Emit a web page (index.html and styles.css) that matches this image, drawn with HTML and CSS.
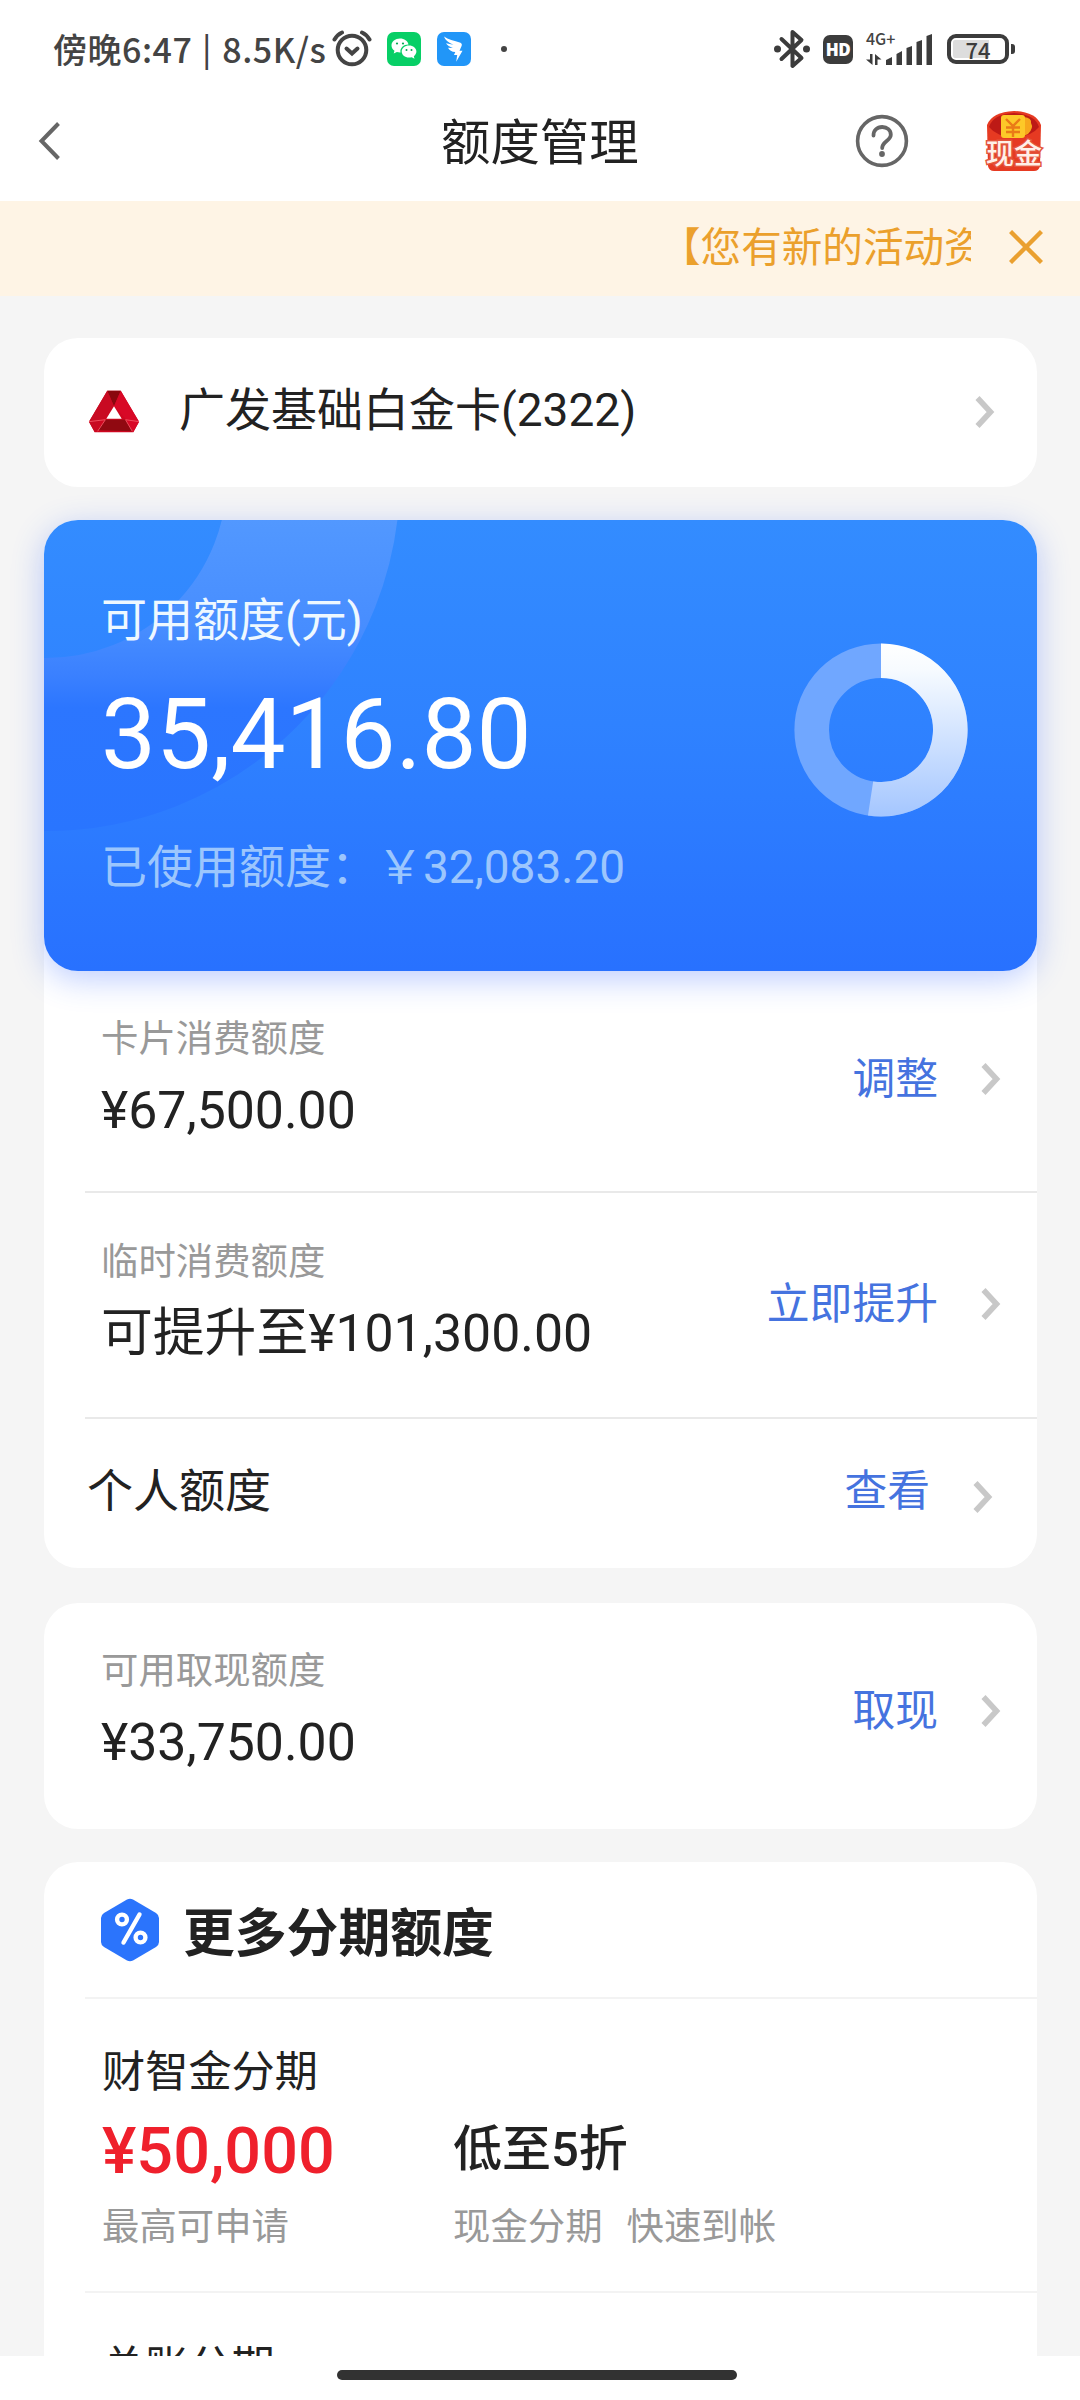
FILE: index.html
```html
<!DOCTYPE html>
<html lang="zh-CN">
<head>
<meta charset="utf-8">
<title>额度管理</title>
<link rel="stylesheet" href="styles.css">
</head>
<body>
<div class="screen">
  <div class="statusbar">
    <span class="st-time">傍晚6:47</span><span class="st-sep">|</span><span class="st-speed">8.5K/s</span>
    <svg class="ic-alarm" width="40" height="40" viewBox="0 0 40 40" fill="none" stroke="#444" stroke-width="4" stroke-linecap="round"><circle cx="20" cy="21" r="14.3"/><path d="M14.5 19.5l5.5 5 5.5-5"/><path d="M2.500 10.500q3-5 7.500-7M37.500 10.500q-3-5-7.500-7"/></svg>
    <svg class="ic-wechat" width="34" height="34" viewBox="0 0 34 34"><rect width="34" height="34" rx="7" fill="#07cf66"/><path d="M13 6.500c-4.800 0-8.500 3-8.500 7 0 2.200 1.200 4 3 5.300l-.8 2.700 3.200-1.500q1.500.4 3.100.4l.5 0c-.8-4.600 3.300-8 8-7.900C20.800 9 17.300 6.500 13 6.500z" fill="#fff"/><path d="M22 13.500c-4.200 0-7.300 2.700-7.300 6s3.100 6.100 7.300 6.100q1.400 0 2.700-.4l2.800 1.500-.7-2.500c1.600-1.200 2.600-2.800 2.600-4.700 0-3.300-3.200-6-7.400-6z" fill="#fff"/><g fill="#07a855"><circle cx="10" cy="11.500" r="1.100"/><circle cx="16" cy="11.500" r="1.100"/><circle cx="19.500" cy="18" r="1"/><circle cx="24.500" cy="18" r="1"/></g></svg>
    <svg class="ic-ding" width="34" height="34" viewBox="0 0 34 34"><rect width="34" height="34" rx="7" fill="#2196f8"/><path d="M7 4.500c4 3 10 4 16.500 6.300q2 .8 1.200 3l-2.200 5h3l-6.300 11 1-6.800h-3.200l1.300-3q-5.300-.4-7.300-4.300l4.800.2q-4.800-1.200-6.800-4.600l7.500 1.400Q8.500 9.500 7 4.500z" fill="#fff"/></svg>
    <i class="st-dot"></i>
    <span class="st-spacer"></span>
    <svg class="ic-bt" width="38" height="40" viewBox="0 0 38 40" fill="none" stroke="#3c3c3c" stroke-width="4" stroke-linejoin="round" stroke-linecap="round"><path d="M8.500 10l20 19-9 8V3l9 8-20 19"/><g fill="#3c3c3c" stroke="none"><circle cx="4.500" cy="20" r="3.500"/><circle cx="33.500" cy="20" r="3.500"/></g></svg>
    <span class="hd">HD</span>
    <span class="signal"><span class="net">4G+</span>
    <svg width="67" height="34" viewBox="0 0 67 34" fill="#3c3c3c"><path d="M20 33v-5l6-3v8zM30.500 33V22l5.500-3v14zM40.500 33V16l5.500-2v19zM50.500 33V10l5.500-2v25zM60.500 33V4l5.500-2v31zM4 22h2.500v11L0 27.500h4zM9 33V22l6.500 5.500h-4V33z"/></svg></span>
    <span class="battery"><span class="charge">74</span></span>
  </div>

  <div class="navbar">
    <svg class="back" width="24" height="40" viewBox="0 0 24 40" fill="none" stroke="#666" stroke-width="4"><path d="M21.500 2.500L4.500 20l17 17.500"/></svg>
    <h1>额度管理</h1>
    <svg class="help" width="54" height="54" viewBox="0 0 54 54" fill="none" stroke="#666" stroke-width="3.600"><circle cx="27" cy="27" r="24.400"/><path d="M18.500 21.500c0-5 3.500-8.500 8.700-8.500 5 0 8.600 3.200 8.600 7.700 0 6-8.600 6.700-8.600 13.300" stroke-width="3.800" stroke-linecap="round"/><circle cx="27" cy="40" r="2.900" fill="#666" stroke="none"/></svg>
    <span class="packet">
      <svg width="60" height="62" viewBox="0 0 60 62"><path d="M3 15Q8 2 30 1q22 1 27 14l-1 41q-1 5-6 5H10q-5 0-6-5z" fill="#e63a22"/><path d="M5 17Q9 4 30 3q21 1 25 14-8 10-25 10T5 17z" fill="#bd1a16"/><path d="M40 7q8 1 7 6 3 5-3 11l-7 3z" fill="#f7a81c"/><rect x="17" y="5" width="24" height="23" rx="3" fill="#fdc928"/><path d="M22 9l7 7 7-7M22 17.500h14M22 22h14M29 16v11" fill="none" stroke="#ea7b17" stroke-width="2.400"/></svg>
      <b>现金</b>
    </span>
  </div>

  <div class="notice">
    <div class="marquee"><span>【您有新的活动资格】</span></div>
    <svg width="34" height="34" viewBox="0 0 34 34" fill="none" stroke="#eaa030" stroke-width="4.400"><path d="M1.500 1.500l31 31M32.500 1.500l-31 31"/></svg>
  </div>

  <main class="content">
    <section class="card picker">
      <svg width="52" height="46" viewBox="-1 0 54 46"><path d="M19 1h14l19 32-6 11H6L0 33z" fill="#cf0720"/><path d="M19 1h14l-7 16z" fill="#8a070e"/><path d="M19 1l7 16-13 15-7 12-6-11z" fill="#c80a22"/><path d="M33 1l19 32-6 11-7-13-13-14z" fill="#d80826"/><path d="M17 31h21l7 12-36-1z" fill="#900911"/><path d="M26 17l8 13H18z" fill="#fff"/><path d="M0 33l17-2-8 12M52 33l-14-2 7 12" fill="none" stroke="#ee5060" stroke-width="1"/></svg>
      <span class="card-name">广发基础白金卡(2322)</span>
      <svg class="chev" width="20" height="34" viewBox="0 0 20 34"><path d="M2.500 3l13 14-13 14"/></svg>
    </section>

    <section class="limits">
      <div class="hero">
        <svg class="arc" width="360" height="320" viewBox="0 0 360 320"><defs><linearGradient id="arcFill" gradientUnits="userSpaceOnUse" x1="0" y1="0" x2="0" y2="312"><stop offset="0" stop-color="#5298ff"/><stop offset=".35" stop-color="#478dff"/><stop offset=".5" stop-color="#3a80ff"/><stop offset=".6" stop-color="#2c76ff"/><stop offset="1" stop-color="#2975ff"/></linearGradient></defs><circle cx="2" cy="-43" r="267.500" fill="none" stroke="url(#arcFill)" stroke-width="173"/></svg>
        <div class="hero-text">
          <div class="hero-label">可用额度(元)</div>
          <div class="hero-amount">35,416.80</div>
          <div class="hero-used">已使用额度：￥32,083.20</div>
        </div>
        <svg class="donut" width="174" height="174" viewBox="-87 -87 174 174"><defs><linearGradient id="ring" gradientUnits="userSpaceOnUse" x1="0" y1="-87" x2="0" y2="87"><stop offset="0" stop-color="#fff"/><stop offset=".15" stop-color="#f7fbff"/><stop offset="1" stop-color="#a4c6ff"/></linearGradient></defs><circle r="69.300" fill="none" stroke="#70a7ff" stroke-width="34.600"/><path d="M0-69.300A69.300 69.300 0 1 1-10.430 68.510" fill="none" stroke="url(#ring)" stroke-width="34.600"/></svg>
      </div>
      <div class="row r1">
        <div><div class="label">卡片消费额度</div><div class="amount">¥67,500.00</div></div>
        <a class="action">调整<svg class="chev" width="20" height="34" viewBox="0 0 20 34"><path d="M2.500 3l13 14-13 14"/></svg></a>
      </div>
      <div class="row r2">
        <div><div class="label">临时消费额度</div><div class="amount">可提升至¥101,300.00</div></div>
        <a class="action">立即提升<svg class="chev" width="20" height="34" viewBox="0 0 20 34"><path d="M2.500 3l13 14-13 14"/></svg></a>
      </div>
      <div class="row r3">
        <div class="personal">个人额度</div>
        <a class="action">查看<svg class="chev" width="20" height="34" viewBox="0 0 20 34"><path d="M2.500 3l13 14-13 14"/></svg></a>
      </div>
    </section>

    <section class="card cash">
      <div><div class="label">可用取现额度</div><div class="amount">¥33,750.00</div></div>
      <a class="action">取现<svg class="chev" width="20" height="34" viewBox="0 0 20 34"><path d="M2.500 3l13 14-13 14"/></svg></a>
    </section>

    <section class="more">
      <div class="more-head">
        <svg width="58" height="64" viewBox="0 0 58 64"><path d="M26 1.500q3-1.500 6 0l23 13.500q3 2 3 5v24q0 3-3 5L32 62.500q-3 1.500-6 0L3 49q-3-2-3-5V20q0-3 3-5z" fill="#2b74fc"/><g fill="none" stroke="#fff" stroke-width="4.400"><circle cx="21" cy="21.500" r="4.900"/><circle cx="39.500" cy="39.500" r="4.900"/><path d="M38.500 16.500l-16 28" stroke-linecap="round"/></g></svg>
        <h2>更多分期额度</h2>
      </div>
      <div class="plan">
        <div class="plan-name">财智金分期</div>
        <div class="plan-grid">
          <div class="price">¥50,000</div><div class="deal">低至5折</div>
          <div class="hint">最高可申请</div><div class="hint tags"><span>现金分期</span><span>快速到帐</span></div>
        </div>
      </div>
      <div class="next-plan">总账分期</div>
    </section>
  </main>
  <div class="homebar"><i></i></div>
</div>
</body>
</html>
```
FILE: styles.css
```css
* { box-sizing: border-box; }
body { margin: 0; background: #fff; }
.screen {
  width: 1080px; height: 2400px; overflow: hidden;
  display: flex; flex-direction: column;
  font-family: Roboto, "Noto Sans CJK SC", sans-serif;
  color: #222; white-space: nowrap;
}
svg { display: block; flex: none; }
h1, h2 { margin: 0; }

.statusbar {
  height: 98px; flex: none; padding: 0 71px 0 53px;
  display: flex; align-items: center;
  font: 500 34px/50px "Noto Sans CJK SC", sans-serif; color: #444;
}
.st-time, .st-speed { letter-spacing: .5px; }
.st-sep { margin: 0 11px 5px 10px; font-size: 32px; }
.ic-alarm { margin-left: 6px; }
.ic-wechat { margin-left: 15px; }
.ic-ding { margin-left: 16px; }
.st-dot { width: 6px; height: 6px; border-radius: 50%; background: #444; margin-left: 30px; }
.st-spacer { flex: 1; }
.hd {
  width: 30px; height: 29px; margin: 0 13px 0 12px; border-radius: 7px; background: #3c3c3c; color: #fff;
  font: 800 17px/29px "Open Sans", sans-serif; text-align: center; letter-spacing: -.5px;
}
.signal { position: relative; width: 67px; height: 34px; margin-right: 14px; }
.net { position: absolute; left: 0; top: -1px; font: 500 16px/15px "Noto Sans CJK SC", sans-serif; }
.battery {
  position: relative; width: 62px; height: 30px; padding: 2px;
  border: 4px solid #3c3c3c; border-radius: 9px; display: flex;
}
.battery::after { content: ""; position: absolute; left: 60px; top: 6px; width: 4px; height: 10px; border-radius: 0 3px 3px 0; background: #3c3c3c; }
.charge {
  width: 50px; border-radius: 2px; text-align: center; color: #3c3c3c;
  font: 500 22px/18px "Noto Sans CJK SC", sans-serif;
  background: linear-gradient(90deg, #ddd 72%, transparent 72%);
}

.navbar { height: 103px; flex: none; padding: 0 36px 17px 37px; display: flex; align-items: center; }
h1 { margin-left: 380px; padding-top: 3px; font-size: 49.400px; line-height: 60px; font-weight: 400; width: 200px; }
.help { margin-left: 214px; }
.packet { position: relative; margin-left: 75px; }
.packet b {
  position: absolute; left: 0; top: 29px; width: 60px; text-align: center;
  font-size: 28px; line-height: 32px; font-weight: 500; color: #fff0e8;
  -webkit-text-stroke: 3px #e4553c; paint-order: stroke fill;
}

.notice {
  height: 95px; flex: none; padding: 0 37px 4px 660px; background: #fef4e5; color: #eba02c;
  display: flex; align-items: center; justify-content: space-between;
}
.marquee { width: 311px; overflow: hidden; padding-top: 2px; font-size: 40.600px; line-height: 60px; }

.content { height: 2060px; flex: none; overflow: hidden; background: #f5f5f5; padding: 42px 43px 0 44px; display: flex; flex-direction: column; }
.card { flex: none; background: #fff; border-radius: 34px; }
.chev { fill: none; stroke: #c8c8c8; stroke-width: 5.600; }

.picker { height: 149px; margin-bottom: 33px; padding: 0 42px 2px 44px; display: flex; align-items: center; }
.card-name { margin-left: 39px; flex: 1; padding-bottom: 3px; font-size: 46px; line-height: 60px; }

.limits { height: 1048px; flex: none; margin-bottom: 35px; background: #fff; border-radius: 34px; }
.hero {
  position: relative; height: 451px; border-radius: 34px; padding: 0 69px 0 57px;
  display: flex; justify-content: space-between; color: #fff;
  background: linear-gradient(#338cff, #2f82ff 45%, #2871ff);
  box-shadow: 0 8px 32px rgba(50, 100, 255, .32);
}
.arc { position: absolute; left: 0; top: 0; border-radius: 34px 0 0 0; }
.hero-text { position: relative; padding-top: 70px; }
.hero-label { font-size: 46px; line-height: 60px; color: #eef8ff; }
.hero-amount { font-size: 98px; line-height: 116px; margin-top: 27px; }
.hero-used { font-size: 46px; line-height: 60px; margin-top: 44px; color: #9cc6fd; }
.donut { margin-top: 123px; }

.row { display: flex; justify-content: space-between; margin-left: 41px; padding-left: 16px; }
.r1 { height: 222px; border-bottom: 2px solid #e9e9e9; padding-top: 42px; }
.r2 { height: 226px; border-bottom: 2px solid #e9e9e9; padding-top: 43px; }
.r3 { height: 149px; padding: 42px 0 0 2px; }
.label { font-size: 37.400px; line-height: 52px; color: #999; }
.amount { font-size: 51.800px; line-height: 62px; margin-top: 15px; }
.personal { font-size: 46px; line-height: 60px; }
.action { display: flex; align-items: center; gap: 43px; height: 60px; padding-right: 36px; font-size: 42.800px; line-height: 60px; color: #4573df; }
.r1 .action { margin-top: 36px; }
.r2 .action { margin-top: 38px; }
.r3 .action { padding-right: 44px; }
.r3 .chev { margin-top: 11px; }

.cash { height: 226px; margin-bottom: 33px; padding: 42px 0 0 57px; display: flex; justify-content: space-between; }
.cash .action { margin-top: 36px; }

.more { height: 560px; flex: none; background: #fff; border-radius: 34px 34px 0 0; padding-left: 41px; }
.more-head { height: 137px; border-bottom: 2px solid #f3f3f3; padding: 0 0 0 16px; display: flex; align-items: center; }
h2 { margin-left: 24px; padding-top: 10px; font-size: 51.800px; line-height: 70px; font-weight: 700; }
.plan { height: 294px; border-bottom: 2px solid #f3f3f3; padding: 44px 0 0 17px; }
.plan-name { font-size: 43.200px; line-height: 60px; }
.plan-grid { display: grid; grid-template-columns: 351px auto; grid-template-rows: 94px 52px; row-gap: 4px; align-items: center; justify-content: start; }
.price { font-size: 64.700px; line-height: 76px; padding-top: 2px; font-weight: 500; color: #ef202c; }
.deal { font-size: 49px; line-height: 70px; font-weight: 500; }
.hint { font-size: 37.400px; line-height: 52px; color: #999; }
.tags { display: flex; gap: 24px; }
.next-plan { padding: 45px 0 0 17px; font-size: 43.200px; line-height: 60px; }

.homebar { flex: 1; background: #fff; padding-top: 14px; }
.homebar i { display: block; width: 400px; height: 10px; margin-left: 337px; border-radius: 5px; background: #323232; }
```
